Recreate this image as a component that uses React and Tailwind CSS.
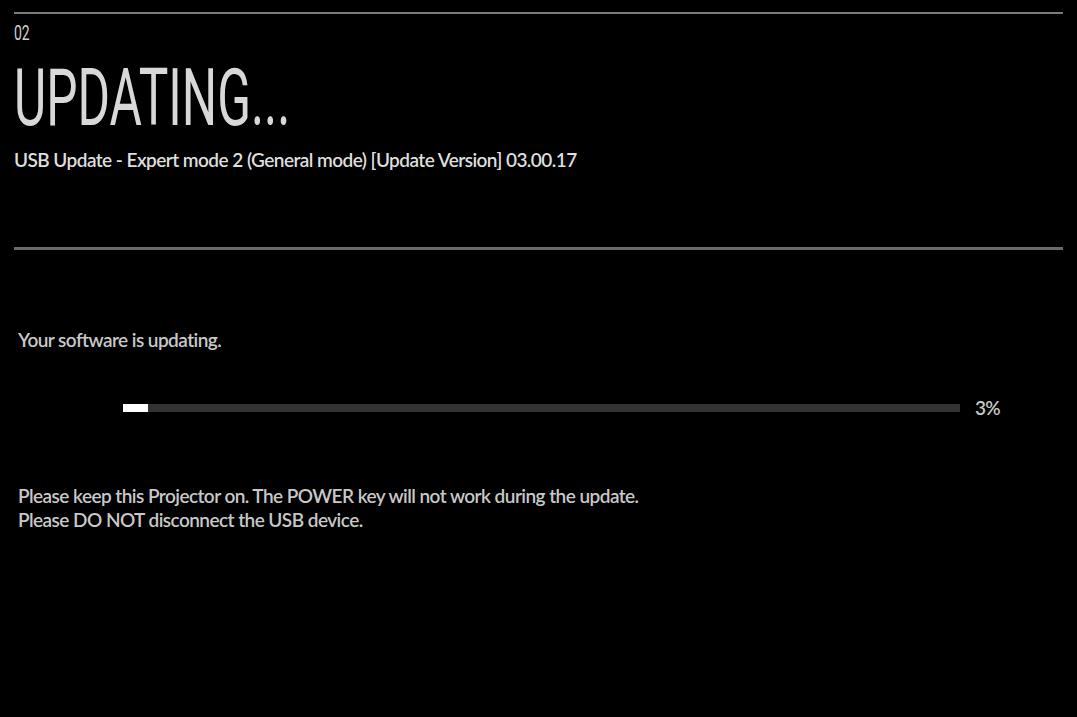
export default function App() {
  const progress = 3;
  return (
    <div className="w-[1077px] h-[717px] bg-black text-[#d6d6d6] overflow-hidden" style={{ fontFamily: 'Lato, sans-serif' }}>
      <div className="px-[14px] pt-[12px]">
        <div className="h-[2px] bg-[#7a7a7a]" />
        <div className="mt-[8px] h-[22px] text-[20px] leading-[22px] text-[#cfcfcf] font-['Roboto'] origin-left scale-x-[0.7]">02</div>
        <div className="mt-[22px] h-[64px] text-[80px] leading-[64px] text-[#d8d8d8] font-['Roboto'] origin-left scale-x-[0.62]">UPDATING...</div>
        <div className="mt-[18px] text-[19px] leading-[24px] font-semibold tracking-[-0.55px] text-[#dedede]">
          USB Update - Expert mode 2 (General mode) [Update Version] 03.00.17
        </div>
        <div className="mt-[75px] h-[3px] bg-[#6a6a6a]" />
      </div>
      <div className="px-[18px] pt-[78px] tracking-[-0.55px]">
        <div className="text-[19px] leading-[24px] font-semibold text-[#c8c8c8]">Your software is updating.</div>
        <div className="mt-[44px] flex items-center">
          <div className="ml-[105px] w-[837px] h-[8px] bg-[#333333] flex">
            <div className="h-full bg-white" style={{ width: `${progress}%` }} />
          </div>
          <div className="ml-[15px] text-[19px] leading-[24px] font-semibold tracking-[-0.8px] text-[#c8c8c8]">{progress}%</div>
        </div>
        <div className="mt-[64px] text-[19px] leading-[24px] font-semibold text-[#c8c8c8]">
          <div>Please keep this Projector on. The POWER key will not work during the update.</div>
          <div>Please DO NOT disconnect the USB device.</div>
        </div>
      </div>
    </div>
  );
}
